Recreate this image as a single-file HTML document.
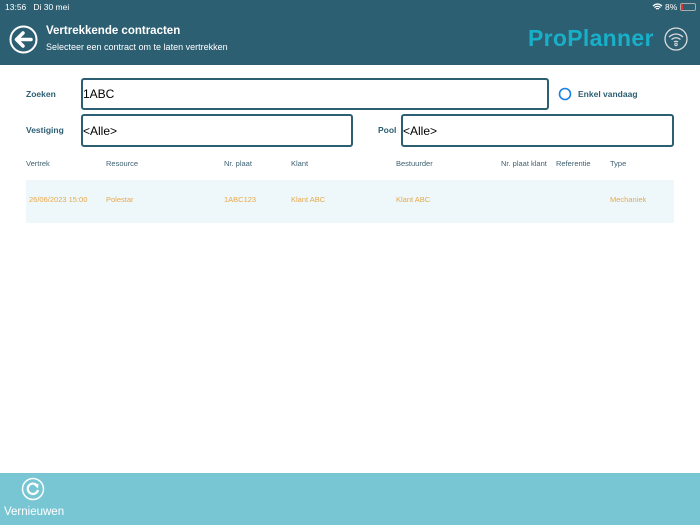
<!DOCTYPE html>
<html><head><meta charset="utf-8"><style>
*{margin:0;padding:0;box-sizing:border-box}
body{width:700px;height:525px;position:relative;background:#fff;font-family:"Liberation Sans",sans-serif;overflow:hidden}
.hdr{position:absolute;left:0;top:0;width:700px;height:65px;background:#2d5f73;color:#fff}
.abs{position:absolute}
.lbl{position:absolute;font-size:8.5px;color:#2d5f73;font-weight:bold}
.inp{position:absolute;border:2px solid #2d5f73;border-radius:3px;font-size:12px;color:#000;padding-left:0;display:flex;align-items:center}
.th{position:absolute;top:159px;font-size:7.5px;color:#3d6070}
.td{position:absolute;top:195px;font-size:7.5px;color:#e8a94a}
</style></head><body>
<div class="hdr">
<div class="abs" style="left:5px;top:2px;font-size:8.5px">13:56&nbsp;&nbsp; Di 30 mei</div>
<div class="abs" style="left:665px;top:2px;font-size:8.5px">8%</div>
<svg class="abs" style="left:652px;top:3px" width="11" height="8" viewBox="0 0 11 8"><path d="M1 3Q5.5-1 10 3M2.5 4.5Q5.5 2 8.5 4.5M4 6Q5.5 5 7 6" stroke="#fff" stroke-width="1.3" fill="none"/></svg>
<div class="abs" style="left:680px;top:3px;width:16px;height:8px;border:1px solid #aaa;border-radius:2px"><div style="width:2px;height:6px;background:#d33"></div></div>
<svg class="abs" style="left:9px;top:25px" width="29" height="29" viewBox="0 0 29 29"><circle cx="14.5" cy="14.5" r="13" stroke="#fff" stroke-width="2" fill="none"/><path d="M22 14.5H8M14 8L7.5 14.5L14 21" stroke="#fff" stroke-width="3.5" fill="none" stroke-linecap="round" stroke-linejoin="round"/></svg>
<div class="abs" style="left:46px;top:25px;font-size:11.5px;font-weight:bold">Vertrekkende contracten</div>
<div class="abs" style="left:46px;top:42px;font-size:9px">Selecteer een contract om te laten vertrekken</div>
<div class="abs" style="left:528px;top:25px;font-size:23px;font-weight:bold;color:#18b0c8;letter-spacing:0.3px">ProPlanner</div>
<svg class="abs" style="left:664px;top:27px" width="24" height="24" viewBox="0 0 24 24"><circle cx="12" cy="12" r="11" stroke="#ddd" stroke-width="1.3" fill="none"/><path d="M5 10Q12 4 19 10M7.5 12.5Q12 9 16.5 12.5M10 15Q12 13.5 14 15" stroke="#ddd" stroke-width="1.3" fill="none"/><circle cx="12" cy="17.5" r="1.2" stroke="#ddd" fill="none"/></svg>
</div>
<div class="lbl" style="left:26px;top:89px">Zoeken</div>
<div class="inp" style="left:81px;top:78px;width:468px;height:32px">1ABC</div>
<svg class="abs" style="left:558px;top:87px" width="14" height="14"><circle cx="7" cy="7" r="5.5" stroke="#1a7fe0" stroke-width="1.6" fill="none"/></svg>
<div class="lbl" style="left:578px;top:89px">Enkel vandaag</div>
<div class="lbl" style="left:26px;top:125px">Vestiging</div>
<div class="inp" style="left:81px;top:114px;width:272px;height:33px">&lt;Alle&gt;</div>
<div class="lbl" style="left:378px;top:125px">Pool</div>
<div class="inp" style="left:401px;top:114px;width:273px;height:33px">&lt;Alle&gt;</div>
<div class="th" style="left:26px">Vertrek</div>
<div class="th" style="left:106px">Resource</div>
<div class="th" style="left:224px">Nr. plaat</div>
<div class="th" style="left:291px">Klant</div>
<div class="th" style="left:396px">Bestuurder</div>
<div class="th" style="left:501px">Nr. plaat klant</div>
<div class="th" style="left:556px">Referentie</div>
<div class="th" style="left:610px">Type</div>
<div class="abs" style="left:26px;top:180px;width:648px;height:43px;background:#eef7fa"></div>
<div class="td" style="left:29px">26/06/2023 15:00</div>
<div class="td" style="left:106px">Polestar</div>
<div class="td" style="left:224px">1ABC123</div>
<div class="td" style="left:291px">Klant ABC</div>
<div class="td" style="left:396px">Klant ABC</div>
<div class="td" style="left:610px">Mechaniek</div>
<div class="abs" style="left:0;top:473px;width:700px;height:52px;background:#78c6d3"></div>
<svg class="abs" style="left:21px;top:477px" width="24" height="24" viewBox="0 0 24 24"><circle cx="12" cy="12" r="10.5" stroke="#fff" stroke-width="1.5" fill="none"/><path d="M16 8.5A5.2 5.2 0 1 0 17 13" stroke="#fff" stroke-width="2.2" fill="none"/><path d="M12.5 7.5L17.5 7L17 11.5Z" fill="#fff"/></svg>
<div class="abs" style="left:4px;top:506px;font-size:11.5px;color:#fff">Vernieuwen</div>
</body></html>
